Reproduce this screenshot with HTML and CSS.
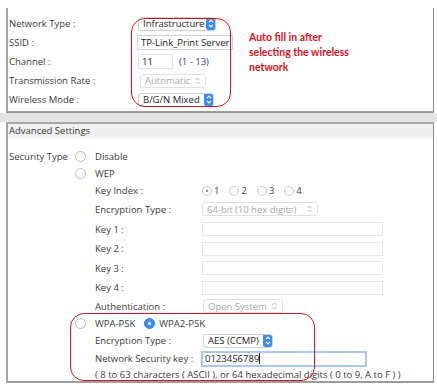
FILE: index.html
```html
<!DOCTYPE html>
<html lang="en">
<head>
  <meta charset="UTF-8">
  <title>Wireless Settings</title>
  <link rel="stylesheet" href="styles.css">
</head>
<body>
  <div class="page">
    <section class="panel basic">
      <div class="form">
        <div class="row">
          <span class="label">Network Type :</span>
          <div class="select sel-infra"><span>Infrastructure</span>
            <svg class="stepper" width="10" height="13" viewBox="0 0 10 13"><rect width="10" height="13" rx="2.5" fill="#3b8bf4"/><path d="M3 5.2l2-2 2 2M3 7.8l2 2 2-2" stroke="#fff" stroke-width="1.2" fill="none"/></svg>
          </div>
        </div>
        <div class="row">
          <span class="label">SSID :</span>
          <div class="input ssid">TP-Link_Print Server</div>
        </div>
        <div class="row">
          <span class="label">Channel :</span>
          <div class="input channel">11</div>
          <span class="range">(1 - 13)</span>
        </div>
        <div class="row">
          <span class="label">Transmission Rate :</span>
          <div class="select disabled sel-rate"><span>Automatic</span>
            <svg class="chev" width="7" height="10" viewBox="0 0 7 10"><path d="M1.5 4l2-2 2 2M1.5 6l2 2 2-2" stroke="#b5b5b5" fill="none"/></svg>
          </div>
        </div>
        <div class="row">
          <span class="label">Wireless Mode :</span>
          <div class="select sel-mode"><span>B/G/N Mixed</span>
            <svg class="stepper" width="10" height="13" viewBox="0 0 10 13"><rect width="10" height="13" rx="2.5" fill="#3b8bf4"/><path d="M3 5.2l2-2 2 2M3 7.8l2 2 2-2" stroke="#fff" stroke-width="1.2" fill="none"/></svg>
          </div>
        </div>
      </div>
      <p class="note">Auto fill in after<br>selecting the wireless<br>network</p>
    </section>

    <div class="gap"></div>

    <section class="panel advanced">
      <div class="head">Advanced Settings</div>
      <div class="body">
        <div class="row h18">
          <span class="sec-label">Security Type</span>
          <span class="radio"></span>
          <span class="opt">Disable</span>
        </div>
        <div class="row h17 indent">
          <span class="radio"></span>
          <span class="opt">WEP</span>
        </div>
        <div class="row h17 sub">
          <span class="sub-label">Key Index :</span>
          <span class="mini checked"></span><span class="num">1</span>
          <span class="mini"></span><span class="num">2</span>
          <span class="mini"></span><span class="num">3</span>
          <span class="mini"></span><span class="num">4</span>
        </div>
        <div class="row h20 sub">
          <span class="sub-label">Encryption Type :</span>
          <div class="select disabled sel-bits"><span>64-bit (10 hex digits)</span>
            <svg class="chev" width="7" height="10" viewBox="0 0 7 10"><path d="M1.5 4l2-2 2 2M1.5 6l2 2 2-2" stroke="#b5b5b5" fill="none"/></svg>
          </div>
        </div>
        <div class="row h20 sub">
          <span class="sub-label">Key 1 :</span>
          <div class="input key"></div>
        </div>
        <div class="row h19 sub">
          <span class="sub-label">Key 2 :</span>
          <div class="input key"></div>
        </div>
        <div class="row h20 sub">
          <span class="sub-label">Key 3 :</span>
          <div class="input key"></div>
        </div>
        <div class="row h19 sub">
          <span class="sub-label">Key 4 :</span>
          <div class="input key"></div>
        </div>
        <div class="row h18 sub">
          <span class="sub-label">Authentication :</span>
          <div class="select disabled sel-auth"><span>Open System</span>
            <svg class="chev" width="7" height="10" viewBox="0 0 7 10"><path d="M1.5 4l2-2 2 2M1.5 6l2 2 2-2" stroke="#b5b5b5" fill="none"/></svg>
          </div>
        </div>
        <div class="row h17 indent">
          <span class="radio"></span>
          <span class="opt">WPA-PSK</span>
          <span class="radio on"></span>
          <span class="opt">WPA2-PSK</span>
        </div>
        <div class="row h17 sub">
          <span class="sub-label">Encryption Type :</span>
          <div class="select sel-aes"><span>AES (CCMP)</span>
            <svg class="stepper" width="10" height="13" viewBox="0 0 10 13"><rect width="10" height="13" rx="2.5" fill="#3b8bf4"/><path d="M3 5.2l2-2 2 2M3 7.8l2 2 2-2" stroke="#fff" stroke-width="1.2" fill="none"/></svg>
          </div>
        </div>
        <div class="row h19 sub">
          <span class="sub-label">Network Security key :</span>
          <div class="input psk">0123456789<span class="caret"></span></div>
        </div>
        <div class="row h13 sub">
          <span class="hint">( 8 to 63 characters ( ASCII ), or 64 hexadecimal digits ( 0 to 9, A to F ) )</span>
        </div>
      </div>
    </section>

    <div class="mark mark-top"></div>
    <div class="mark mark-bottom"></div>
  </div>
</body>
</html>
```

FILE: styles.css
```css
html, body {
  margin: 0;
  padding: 0;
  background: #fff;
}

body {
  font-family: "Open Sans", "Liberation Sans", sans-serif;
  font-size: 9.5px;
  color: #3a3a3a;
  white-space: nowrap;
}

.page {
  position: relative;
  width: 437px;
  height: 388px;
  padding-top: 8px;
  box-sizing: border-box;
}

.panel {
  margin-left: 6px;
  width: 428px;
  box-sizing: border-box;
  background: #fff;
  border-left: 2px solid #a3a3a3;
  border-right: 1px solid #8e8e8e;
  border-bottom: 2px solid #9c9c9c;
}

.basic {
  display: flex;
  padding: 6px 0 2px 1px;
}

.form {
  width: 240px;
}

.row {
  display: flex;
  align-items: center;
  height: 19px;
}

.label {
  width: 129px;
  flex: none;
}

.note {
  margin: 16px 0 0 0;
  font-family: "Lato", "Liberation Sans", sans-serif;
  font-weight: bold;
  font-size: 10.5px;
  line-height: 15px;
  color: #e0101c;
}

.gap {
  height: 9px;
  background: #e4e4e4;
}

.advanced {
  border-top: 2px solid #a8a8a8;
}

.head {
  height: 14px;
  line-height: 14px;
  background: #efefef;
  padding-left: 1px;
}

.body {
  padding: 9px 0 0 1px;
}

.h13 { height: 13px; }
.h17 { height: 17px; }
.h18 { height: 18px; }
.h19 { height: 19px; }
.h20 { height: 20px; }

.sec-label {
  width: 66px;
  flex: none;
}

.indent { padding-left: 66px; }
.sub { padding-left: 86px; }

.sub-label {
  width: 107px;
  flex: none;
}

.radio {
  width: 9px;
  height: 9px;
  border: 1px solid #bcbcbc;
  border-radius: 50%;
  background: #fff;
  margin-right: 9px;
  flex: none;
}

.radio.on {
  background: #3d8ef3;
  border-color: #2f7ee6;
  position: relative;
  margin-right: 4px;
}

.radio.on::after {
  content: "";
  position: absolute;
  left: 3px;
  top: 3px;
  width: 3px;
  height: 3px;
  border-radius: 50%;
  background: #fff;
}

.opt { margin-right: 9px; }

.mini {
  width: 8px;
  height: 8px;
  border: 1px solid #c8c8c8;
  border-radius: 50%;
  flex: none;
  position: relative;
  margin-right: 2px;
}

.mini.checked::after {
  content: "";
  position: absolute;
  left: 3px;
  top: 3px;
  width: 2px;
  height: 2px;
  border-radius: 50%;
  background: #666;
}

.num { margin-right: 10px; }

.select {
  display: flex;
  align-items: center;
  justify-content: space-between;
  height: 14px;
  box-sizing: border-box;
  border: 1px solid #d0d0d0;
  border-radius: 3px;
  padding-left: 4px;
  color: #222;
  background: #fff;
  overflow: hidden;
}

.select.disabled {
  color: #a8a8a8;
  border-color: #e0e0e0;
  padding-right: 4px;
}

.stepper { margin-right: -1px; flex: none; }
.chev { flex: none; }

.sel-infra { width: 78px; }
.sel-rate { width: 66px; margin-left: 2px; }
.sel-mode { width: 76px; }
.sel-bits { width: 116px; }
.sel-auth { width: 80px; margin-left: 1px; }
.sel-aes { width: 70px; margin-left: 1px; }

.input {
  height: 15px;
  box-sizing: border-box;
  border: 1px solid #cfcfcf;
  padding-left: 3px;
  line-height: 13px;
  color: #222;
  background: #fff;
}

.ssid { width: 96px; margin-left: -1px; overflow: hidden; }
.channel { width: 35px; border-color: #e2e2e2; }

.range {
  margin-left: 6px;
  color: #2e3f95;
}

.key {
  width: 181px;
  height: 14px;
  border-color: #e6e6e6;
}

.psk {
  width: 166px;
  height: 16px;
  margin-left: -1px;
  border: 2px solid #a9c8ee;
  padding-left: 2px;
  line-height: 12px;
}

.caret {
  display: inline-block;
  width: 1px;
  height: 11px;
  background: #222;
  vertical-align: middle;
}

.mark {
  position: absolute;
  border: 1.6px solid #d4121c;
  border-radius: 14px;
}

.mark-top {
  left: 131px;
  top: 18px;
  width: 98px;
  height: 87px;
}

.mark-bottom {
  left: 70px;
  top: 313px;
  width: 243px;
  height: 66px;
}
```
